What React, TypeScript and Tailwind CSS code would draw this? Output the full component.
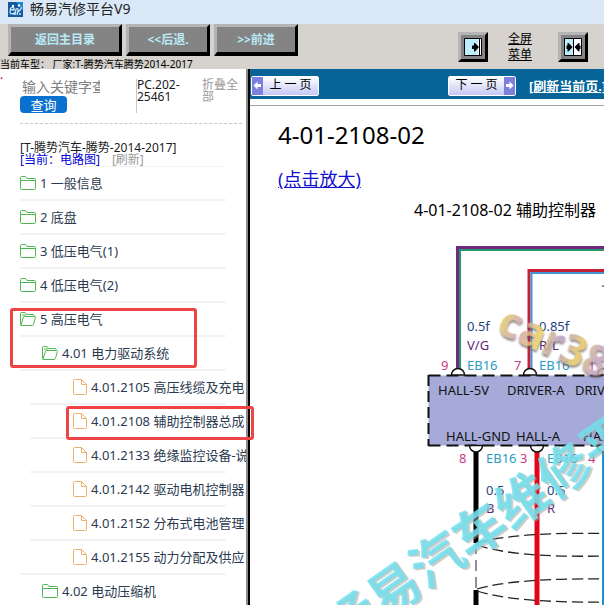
import { useState } from "react";
import type { ReactNode } from "react";

type TreeItem = {
  label: string;
  level: 1 | 2 | 3;
  icon: "closed" | "open" | "file";
  line: string;
  mark?: string;
};

const treeItems: TreeItem[] = [
  { label: "1 一般信息", level: 1, icon: "closed", line: "ml-5" },
  { label: "2 底盘", level: 1, icon: "closed", line: "ml-5" },
  { label: "3 低压电气(1)", level: 1, icon: "closed", line: "ml-5" },
  { label: "4 低压电气(2)", level: 1, icon: "closed", line: "ml-5" },
  {
    label: "5 高压电气",
    level: 1,
    icon: "open",
    line: "ml-5",
    mark: "left-[10px] top-[5px] h-[60px] w-[187px]",
  },
  { label: "4.01 电力驱动系统", level: 2, icon: "open", line: "ml-5" },
  { label: "4.01.2105 高压线缆及充电", level: 3, icon: "file", line: "ml-[30px]" },
  {
    label: "4.01.2108 辅助控制器总成",
    level: 3,
    icon: "file",
    line: "ml-[30px]",
    mark: "left-[66px] top-px h-[34px] w-[188px]",
  },
  { label: "4.01.2133 绝缘监控设备-说", level: 3, icon: "file", line: "ml-[30px]" },
  { label: "4.01.2142 驱动电机控制器", level: 3, icon: "file", line: "ml-[30px]" },
  { label: "4.01.2152 分布式电池管理", level: 3, icon: "file", line: "ml-[30px]" },
  { label: "4.01.2155 动力分配及供应", level: 3, icon: "file", line: "ml-5" },
  { label: "4.02 电动压缩机", level: 2, icon: "closed", line: "ml-5" },
];

const indents = { 1: "pl-5", 2: "pl-[42px]", 3: "pl-[73px]" };

const TreeIcon = ({ type }: { type: TreeItem["icon"] }) => {
  if (type === "file") {
    return (
      <svg className="h-4 w-[14px] shrink-0" viewBox="0 0 14 16" fill="none" stroke="#eeb06a">
        <path d="M1.5 .5h7l5 5v9q0 1-1 1h-11q-1 0-1-1v-13q0-1 1-1z" />
        <path d="M8.5 .5v5h5" />
      </svg>
    );
  }

  return (
    <svg className="h-[14px] w-4 shrink-0" viewBox="0 0 16 14" fill="none" stroke="#4fb653">
      {type === "closed" ? (
        <>
          <path d="M.5 12.500v-11q0-1 1-1h4l1.500 2h7.500q1 0 1 1v9q0 1-1 1h-13q-1 0-1-1z" />
          <path d="M.5 4.500h15" />
        </>
      ) : (
        <>
          <path d="M.5 12v-10.500q0-1 1-1h3.500l1.500 2h6.500q1 0 1 1v1" />
          <path d="M1 13l2.500-8q.2-.5 .8-.5h10.200q1.200 0 .9 1l-2 7q-.3 1-1.200 1h-11q-1 0-.7-.9" />
          <path d="M2 3h4" />
        </>
      )}
    </svg>
  );
};

const TreeRow = ({ item }: { item: TreeItem }) => (
  <li className="relative">
    <a
      href="#"
      className={`flex h-8 items-center gap-1 text-[13px] leading-5 text-[#2b3a4f] ${indents[item.level]}`}
    >
      <TreeIcon type={item.icon} />
      <span className="min-w-0 overflow-hidden whitespace-nowrap">{item.label}</span>
    </a>
    <div className={`mr-5 h-[2px] bg-[#f3f3f3] ${item.line}`} />
    {item.mark && (
      <div
        className={`pointer-events-none absolute z-10 rounded-[3px] border-[3px] border-[#ee4444] ${item.mark}`}
      />
    )}
  </li>
);

const Sidebar = () => {
  const [query, setQuery] = useState("");

  return (
    <aside className="relative flex w-[250px] shrink-0">
      <div className="min-w-0 flex-1">
        <span className="absolute left-0 top-0 text-xs leading-3 text-[#c00000]">.</span>
        <div className="ml-5 mr-1 flex items-start border-b border-dashed border-[#c4c8d2] py-[10px]">
          <div className="w-[116px]">
            <input
              aria-label="关键字"
              placeholder="输入关键字查"
              value={query}
              onChange={(e) => setQuery(e.target.value)}
              className="block h-4 w-20 pl-[2px] text-sm leading-4 outline-none placeholder:text-[#808080]"
            />
            <button className="mt-px block h-[17px] w-[47px] rounded-[4px] bg-[#0a71d0] text-[13px] leading-4 text-white">
              查询
            </button>
          </div>
          <p className="h-[34px] w-[66px] border-l border-[#c8c8c8] text-xs leading-3 text-[#1a1a1a]">
            PC.202-
            <br />
            25461
          </p>
          <a href="#" className="w-10 text-xs leading-3 text-[#999]">
            折叠全部
          </a>
        </div>
        <div className="ml-5 pt-[18px] text-xs leading-3">
          <p className="text-[#1a1a1a]">[T-腾势汽车-腾势-2014-2017]</p>
          <p className="flex gap-3">
            <a href="#" className="text-[#0000d8]">
              [当前：电路图]
            </a>
            <a href="#" className="text-[#999]">
              [刷新]
            </a>
          </p>
        </div>
        <div className="ml-[52px] mr-5 h-px bg-[#f3f3f3]" />
        <ul>
          {treeItems.map((item) => (
            <TreeRow key={item.label} item={item} />
          ))}
        </ul>
      </div>
      <div className="w-[4px] shrink-0 border-l-2 border-[#8c8c8c] bg-black" />
    </aside>
  );
};

const BevelButton = ({ className, children }: { className: string; children: ReactNode }) => (
  <button
    className={`h-8 border-[3px] border-b-4 border-b-black border-l-[#b4b4b4] border-r-black border-t-[#b4b4b4] bg-[#848484] text-xs font-bold leading-4 text-[#b9ebf7] ${className}`}
  >
    {children}
  </button>
);

const IconButton = ({ label, children }: { label: string; children: ReactNode }) => (
  <button
    aria-label={label}
    className="flex h-[30px] w-[30px] items-center justify-center border-[3px] border-b-black border-l-[#b4b4b4] border-r-black border-t-[#b4b4b4] bg-[#848484]"
  >
    <svg className="h-[18px] w-[18px] shrink-0" viewBox="0 0 18 18">
      {children}
    </svg>
  </button>
);

const Toolbar = () => (
  <div className="flex h-[45px] shrink-0 justify-between bg-[#d6d3ce]">
    <div>
      <div className="flex gap-1 pl-2">
        <BevelButton className="w-[114px]">返回主目录</BevelButton>
        <BevelButton className="w-[84px]">&lt;&lt;后退.</BevelButton>
        <BevelButton className="w-[84px]">&gt;&gt;前进</BevelButton>
      </div>
      <p className="whitespace-nowrap text-[10px] leading-4 text-black">
        当前车型： 厂家:T-腾势汽车腾势2014-2017
      </p>
    </div>
    <div className="flex items-center gap-5 pr-4 pt-px">
      <IconButton label="右移">
        <path d="M.5 .5h17v17h-17z" fill="#fff" stroke="#000" />
        <path d="M1 1h13v16H1z" fill="#bdeefb" />
        <path d="M15.500 1v16" stroke="#000" />
        <path d="M8 7.500h2V5h1l4 4-4 4.500h-1V11H8z" />
      </IconButton>
      <a href="#" className="w-[30px] text-xs leading-4 text-black underline">
        全屏
        <br />
        菜单
      </a>
      <IconButton label="居中">
        <path d="M.5 .5h17v17h-17z" fill="#fff" stroke="#000" />
        <path d="M1 1h8v16H1z" fill="#bdeefb" />
        <path d="M9.500 1v16" stroke="#000" />
        <path d="M2.500 7.500h1V5h1l4 4-4 4.500h-1V11h-1zM16.500 7.500h-1V5h-1l-4 4 4 4.500h1V11h1z" />
      </IconButton>
    </div>
  </div>
);

const Arrow = ({ className }: { className: string }) => (
  <span className="flex w-[11px] shrink-0 items-center justify-center bg-[#7d80dc]">
    <svg className={`h-[9px] w-[9px] ${className}`} viewBox="0 0 9 9" fill="#fff">
      <path d="M4.500 .5L.5 4.500l4 4v-2.500H8V3H4.500z" />
    </svg>
  </span>
);

const PageBar = () => (
  <nav className="flex h-[30px] shrink-0 items-center overflow-hidden bg-[#066498] pl-px pt-[3px]">
    <button className="flex h-5 w-[68px] shrink-0 rounded-xs border border-white bg-linear-to-b from-white to-[#c5c8f4] text-xs leading-4 text-black">
      <Arrow className="rotate-0" />
      <span className="flex-1">上 一 页</span>
    </button>
    <button className="ml-[129px] flex h-5 w-[68px] shrink-0 rounded-xs border border-white bg-linear-to-b from-white to-[#c5c8f4] text-xs leading-4 text-black">
      <span className="flex-1">下 一 页</span>
      <Arrow className="rotate-180" />
    </button>
    <a
      href="#"
      className="ml-[13px] shrink-0 whitespace-nowrap text-[13px] font-bold leading-5 text-white underline"
    >
      [刷新当前页.]
    </a>
  </nav>
);

const WiringDiagram = () => (
  <svg
    className="min-h-0 w-full flex-1"
    viewBox="250 226 354 379"
    preserveAspectRatio="xMinYMin slice"
    fontSize="13"
  >
    <defs>
      <linearGradient id="gold" x1="0" y1="0" x2="1" y2="0">
        <stop offset="0" stopColor="#e2cf5e" />
        <stop offset=".15" stopColor="#cfa0b4" />
        <stop offset=".3" stopColor="#e8cf60" />
        <stop offset=".45" stopColor="#b39ac8" />
        <stop offset=".6" stopColor="#e5c660" />
        <stop offset=".75" stopColor="#bfa0c4" />
        <stop offset="1" stopColor="#e2d062" />
      </linearGradient>
      <filter id="soft" x="-10%" y="-10%" width="120%" height="130%">
        <feDropShadow dx="1" dy="2" stdDeviation="1" floodColor="#5a4a48" floodOpacity=".8" />
      </filter>
    </defs>

    {/* upper wires */}
    <g fill="none">
      <path d="M457.500 370V247.500H620" stroke="#712a80" strokeWidth="3" />
      <path d="M460 370V250H620" stroke="#239a68" strokeWidth="2" />
      <path d="M529 370V270.500H620" stroke="#c71f35" strokeWidth="3" />
      <path d="M531.500 370V273H620" stroke="#3e96d6" strokeWidth="2" />
      <path d="M602 286h8" stroke="#222" />
    </g>

    {/* lower wires */}
    <g fill="none">
      <path d="M476 450V543M476 590V620" stroke="#000" strokeWidth="5" />
      <path d="M476 543V590" stroke="#222" strokeDasharray="11 6" />
      <path d="M537 450V620" stroke="#e3061b" strokeWidth="5" />
      <path d="M604 450V620" stroke="#1b93d3" strokeWidth="4" />
      <g stroke="#222" strokeWidth="1.3" strokeDasharray="11 5">
        <path d="M477 543Q515 532 604 533.500" />
        <path d="M477 545Q515 558 604 556" />
        <path d="M477 589Q515 578 604 579" />
        <path d="M477 591Q515 603 604 602" />
      </g>
    </g>

    {/* connector block */}
    <path d="M428.500 445.500V375.500H620V445.500z" fill="#a5aad8" />
    <g stroke="#111" strokeWidth="2" fill="none">
      <path d="M428.500 375.500H620M428.500 445.500H620" strokeDasharray="12 6" />
      <path d="M428.500 375V446" strokeDasharray="11 5" />
    </g>
    <g fill="#fff" stroke="#111" strokeWidth="1.500">
      <path d="M451.500 375a6.500 6.500 0 0 1 13 0zM523.500 375a6.500 6.500 0 0 1 13 0zM597.500 375a6.500 6.500 0 0 1 13 0z" />
      <path d="M469.500 445.500a6.500 6.500 0 0 0 13 0zM530.500 445.500a6.500 6.500 0 0 0 13 0zM597.500 445.500a6.500 6.500 0 0 0 13 0z" />
    </g>

    <g fill="#111">
      <text x="438" y="395">HALL-5V</text>
      <text x="507" y="395">DRIVER-A</text>
      <text x="575" y="395">DRIVER-B</text>
      <text x="446" y="441">HALL-GND</text>
      <text x="516" y="441">HALL-A</text>
      <text x="583" y="441">HALL-B</text>
    </g>
    <g fill="#cb3a86">
      <text x="441" y="370">9</text>
      <text x="514" y="370">7</text>
      <text x="588" y="370">1</text>
      <text x="459" y="463">8</text>
      <text x="520" y="463">3</text>
      <text x="588" y="463">4</text>
    </g>
    <g fill="#2a9bc2">
      <text x="467" y="370">EB16</text>
      <text x="539" y="370">EB16</text>
      <text x="486" y="463">EB16</text>
      <text x="547" y="463">EB16</text>
    </g>
    <g fill="#1f4482">
      <text x="467" y="331">0.5f</text>
      <text x="539" y="331">0.85f</text>
      <text x="486" y="495">0.5</text>
      <text x="547" y="495">0.5</text>
    </g>
    <g fill="#5c2a78">
      <text x="467" y="350">V/G</text>
      <text x="539" y="350">R/L</text>
      <text x="486" y="513">B</text>
      <text x="547" y="513">R</text>
    </g>

    {/* watermarks */}
    <text
      transform="translate(495 332) rotate(24)"
      fontSize="43"
      fontWeight="700"
      fill="url(#gold)"
      opacity=".85"
      filter="url(#soft)"
    >
      car388
    </text>
    <g transform="translate(341 650) rotate(-35)" fontSize="52" fontWeight="700">
      <text x="1" y="2" fill="#a89a94" opacity=".5">
        畅易汽车维修平台
      </text>
      <text fill="#72e0ee" opacity=".85">
        畅易汽车维修平台
      </text>
    </g>
  </svg>
);

const Content = () => (
  <main className="flex min-w-0 flex-1 flex-col overflow-hidden">
    <PageBar />
    <div className="mt-[6px] border-t border-[#a0a0a8]" />
    <div className="flex flex-col items-start pb-[5px] pl-7 pt-[13px] text-black">
      <h1 className="text-2xl leading-8">4-01-2108-02</h1>
      <a href="#" className="mt-4 text-lg leading-6 text-[#1010d0] underline">
        (点击放大)
      </a>
      <p className="ml-[136px] mt-2 whitespace-nowrap text-base leading-[22px]">
        4-01-2108-02 辅助控制器
      </p>
    </div>
    <WiringDiagram />
  </main>
);

const App = () => (
  <div className="flex h-screen flex-col overflow-hidden bg-white font-['Noto_Sans','Noto_Sans_CJK_SC',sans-serif]">
    <header className="flex h-6 shrink-0 items-start gap-[7px] bg-[#dae8f7] pl-2">
      <svg className="mt-[2px] h-[15px] w-[15px]" viewBox="0 0 15 15">
        <path d="M0 0h15v15H0z" fill="#12599f" />
        <path d="M8 0h7v8z" fill="#2387cf" />
        <path
          d="M2 8q1-4 4-2v2q-4-1-4 2 0 3 4 1v2M7 13l1-6q3-1 2 2l-1 4M10 10q4-3 3-5M11 12h2"
          fill="none"
          stroke="#c8e8fa"
          strokeWidth="1.300"
        />
        <circle cx="5" cy="4" r="1.200" fill="#fff" />
        <circle cx="11" cy="3.500" r="1.200" fill="#fff" />
      </svg>
      <p className="text-sm leading-[18px] text-[#222]">畅易汽修平台V9</p>
    </header>
    <Toolbar />
    <div className="flex min-h-0 flex-1">
      <Sidebar />
      <Content />
    </div>
  </div>
);

export default App;
